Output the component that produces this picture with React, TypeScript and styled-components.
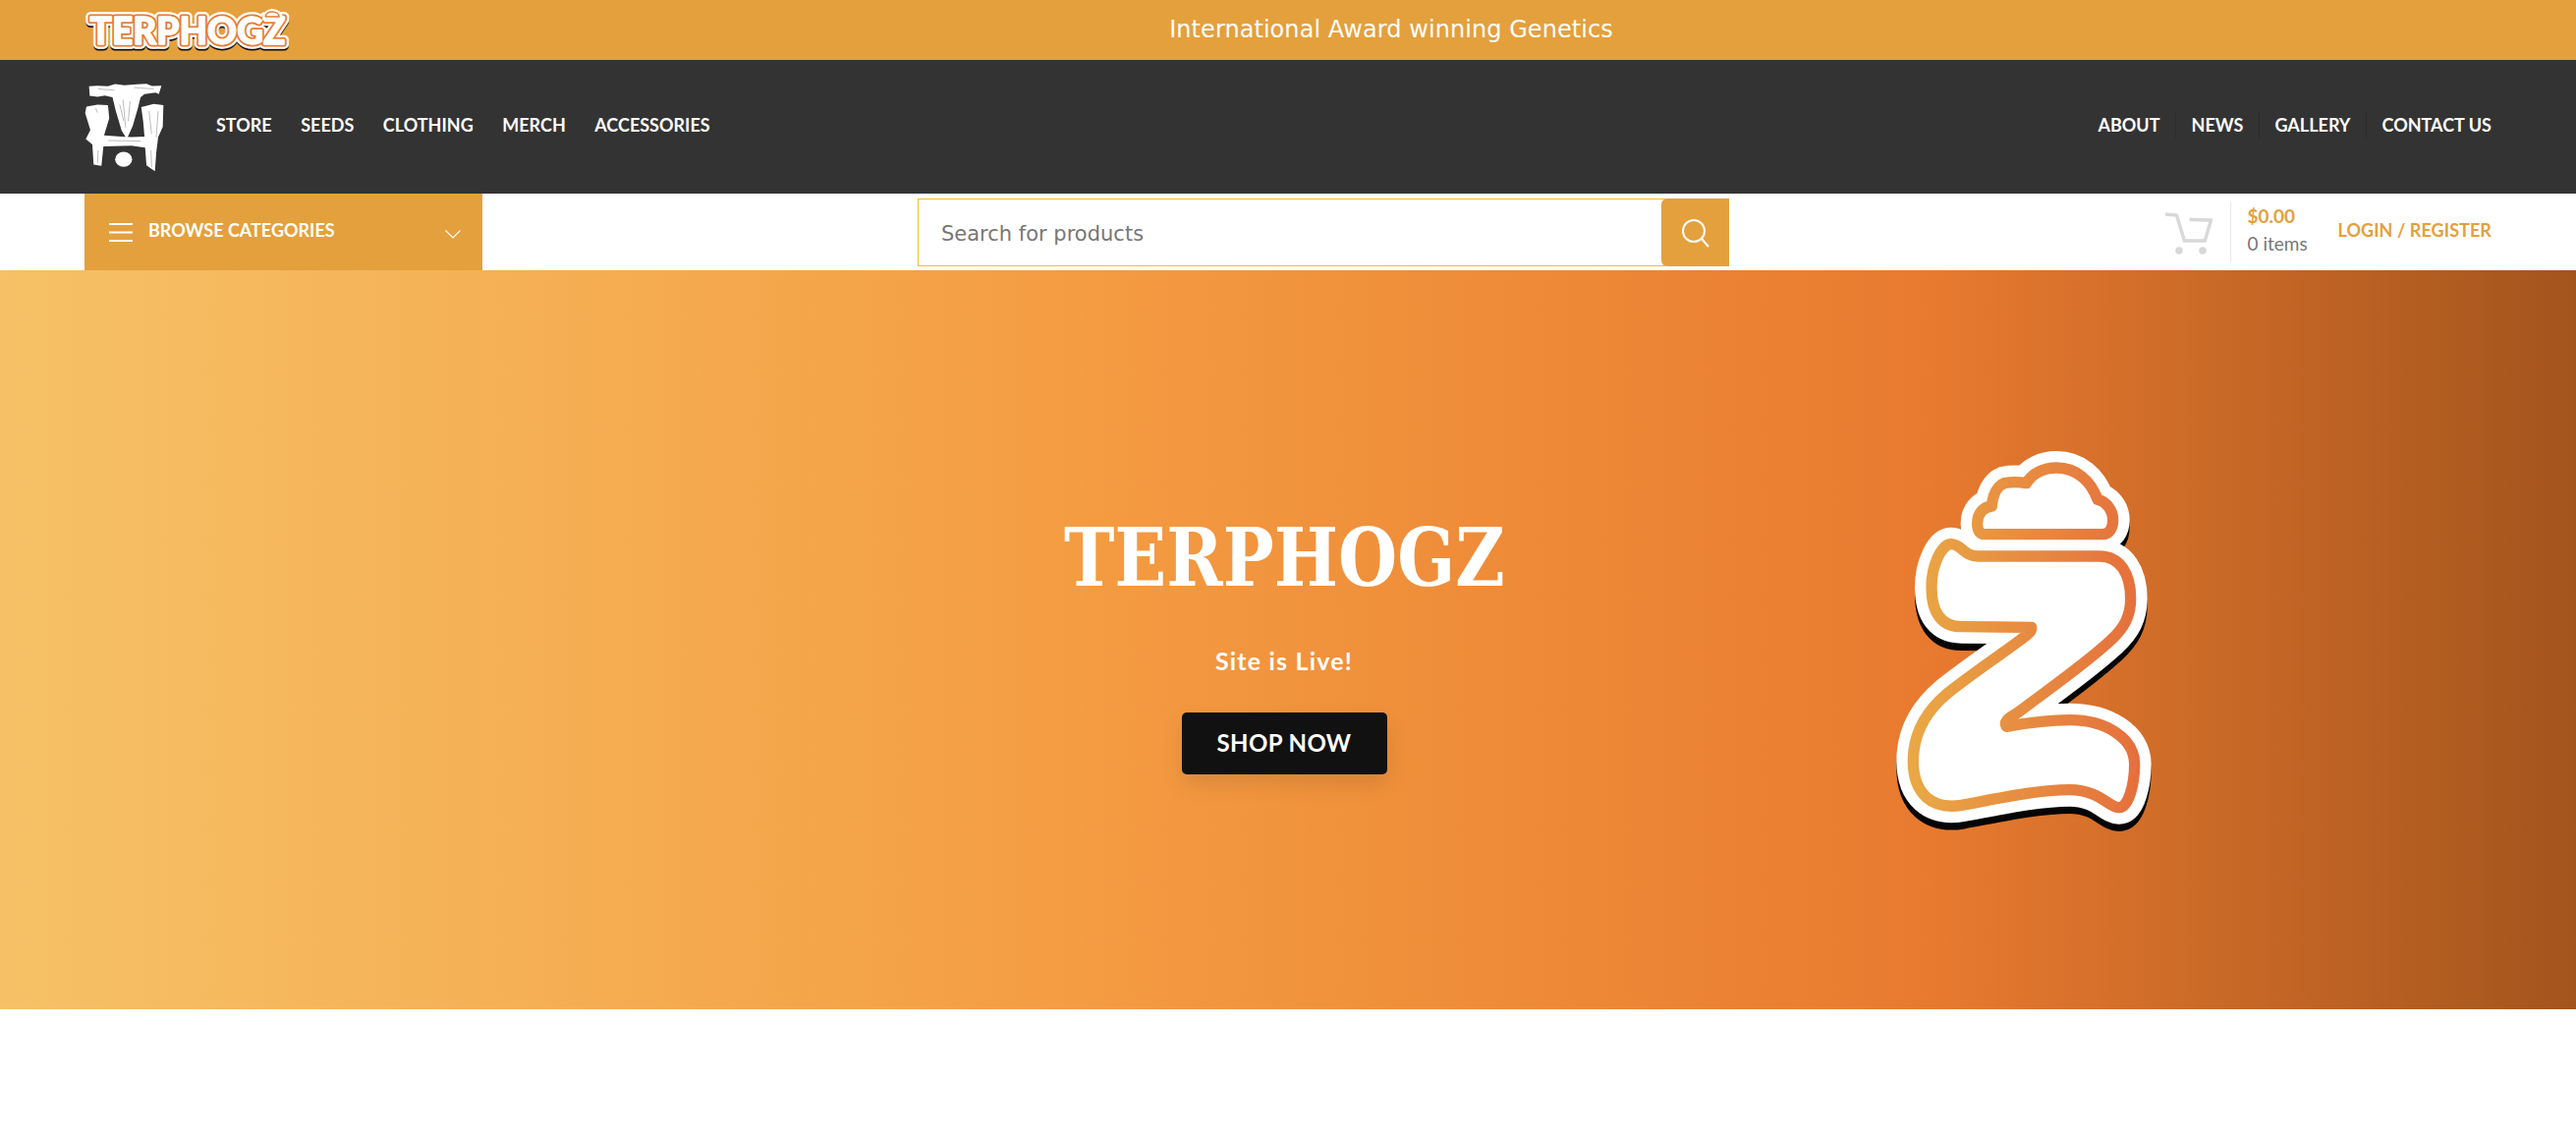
import React from "react";
import styled, { createGlobalStyle } from "styled-components";

const Global = createGlobalStyle`
  html, body { margin: 0; padding: 0; background: #fff; }
  body { font-family: "Lato", "Liberation Sans", sans-serif; overflow: hidden; }
  #root { min-height: 1158px; }
`;

const TopBar = styled.div`
  height: 61px;
  background: #e4a03c;
  display: flex;
  align-items: center;
  padding: 0 86px;
`;
const TopLogo = styled.svg`
  width: 210px;
  height: 46px;
  flex: none;
  margin-top: -1px;
`;
const Promo = styled.div`
  flex: 1;
  text-align: center;
  color: #fff;
  font: 400 24px/30px "DejaVu Sans", sans-serif;
  letter-spacing: 0.06px;
  margin-top: -1px;
`;
const MainBar = styled.header`
  height: 136px;
  background: #333;
  display: flex;
  align-items: center;
  padding: 0 86px;
`;
const Mark = styled.svg`
  width: 81px;
  height: 92px;
  flex: none;
  margin-right: 53px;
  margin-top: -1px;
`;
const NavList = styled.nav<{ $right?: boolean }>`
  display: flex;
  align-items: center;
  margin-left: ${(p) => (p.$right ? "auto" : "0")};
  margin-top: -3px;
`;
const NavLink = styled.a<{ $divided?: boolean }>`
  color: #fff;
  font: 700 18px/27px "Lato", sans-serif;
  padding: 0 ${(p) => (p.$divided ? "15.5px" : "0")};
  margin-right: ${(p) => (p.$divided ? "0" : "29.5px")};
  border-left: ${(p) => (p.$divided ? "1px solid rgba(0,0,0,.12)" : "0")};
  &:first-child { border-left: 0; }
  &:last-child { margin-right: 0; padding-right: 0; }
`;
const SubBar = styled.div`
  height: 78px;
  display: flex;
  padding: 0 86px;
  background: #fff;
`;
const Browse = styled.div`
  width: 405px;
  flex: none;
  box-sizing: border-box;
  background: #e4a03c;
  color: #fff;
  display: flex;
  align-items: center;
  padding: 0 22px 0 25px;
  font: 700 18px/24px "Lato", sans-serif;
`;
const BrowseLabel = styled.span`
  margin-left: 16px;
  flex: 1;
  margin-top: -5px;
`;
const Search = styled.form`
  width: 826px;
  height: 69px;
  margin: 5px 0 0 443px;
  display: flex;
  flex: none;
`;
const SearchInput = styled.div`
  flex: 1;
  border: 1px solid #fbb92f;
  border-right: 0;
  display: flex;
  align-items: center;
  padding: 2px 0 0 23px;
  color: #777;
  font: 400 21px/28px "DejaVu Sans", sans-serif;
`;
const SearchButton = styled.button`
  width: 69px;
  border: 0;
  padding: 0;
  margin-left: -4px;
  background: #e4a03c;
  border-radius: 6px 0 0 6px;
  display: flex;
  align-items: center;
  justify-content: center;
`;
const Tools = styled.div`
  margin-left: auto;
  display: flex;
  align-items: center;
`;
const CartGlyph = styled.svg`
  width: 48px;
  height: 43px;
  margin-top: 3px;
`;
const CartText = styled.div`
  margin-left: 18px;
  padding: 2px 0 6px 17px;
  box-sizing: border-box;
  height: 60px;
  border-left: 1px solid #e6e6e6;
  display: flex;
  flex-direction: column;
  justify-content: space-between;
  font: 400 19px/24px "Lato", sans-serif;
  color: #777;
  width: 93px;
`;
const Price = styled.span`
  color: #e4a03c;
  font-weight: 700;
`;
const Account = styled.a`
  margin-left: 17px;
  color: #e4a03c;
  font: 700 18px/24px "Lato", sans-serif;
  letter-spacing: 0.06px;
  margin-top: -5px;
`;
const Hero = styled.section`
  height: 752px;
  display: grid;
  grid-template-columns: 746px 1122px 754px;
  align-items: center;
  background: linear-gradient(90deg, #f6c166 0%, #f49c42 42%, #e87a2f 75%, #a3541d 100%);
`;
const HeroCopy = styled.div`
  grid-column: 2;
  display: flex;
  flex-direction: column;
  align-items: center;
  color: #fff;
  padding-top: 7px;
`;
const HeroTitle = styled.h1`
  margin: 0;
  font-family: "DejaVu Serif", serif;
  font-weight: 700;
  font-size: 82px;
  line-height: 90px;
  font-stretch: condensed;
  transform: scaleX(0.937);
  white-space: nowrap;
`;
const HeroSub = styled.p`
  margin: 43px 0 0;
  font: 700 25px/34px "Lato", sans-serif;
  letter-spacing: 1.2px;
`;
const ShopButton = styled.a`
  margin-top: 36px;
  width: 209px;
  height: 63px;
  border-radius: 5px;
  background: #111;
  color: #fff;
  display: flex;
  align-items: center;
  justify-content: center;
  font: 700 24px/1 "Lato", sans-serif;
  letter-spacing: 0.4px;
  box-shadow: 0 10px 22px rgba(0, 0, 0, 0.1);
`;
const HeroMark = styled.svg`
  grid-column: 3;
  width: 280px;
  height: 400px;
  margin-left: 52px;
`;

const zPath =
  "M318 368 C350 368 355 405 400 405 L770 405 C835 405 866 460 866 535 C866 590 845 625 805 662 C720 740 610 815 525 880 C505 895 475 905 487 925 C560 912 620 905 680 905 C790 905 878 960 878 1040 C878 1100 860 1172 830 1172 C800 1172 770 1118 680 1118 C580 1118 460 1145 350 1165 C260 1180 202 1130 202 1030 C202 950 240 880 305 825 C380 765 470 705 530 660 C550 645 565 635 563 622 L350 620 C290 620 258 580 258 500 C258 430 290 368 318 368 Z";
const cloudPath =
  "M420 338 L780 338 C800 338 812 320 812 295 C812 262 790 238 765 232 C745 175 700 135 640 135 C600 135 565 152 548 182 C525 178 500 178 480 182 C460 190 445 215 442 252 C415 255 398 275 398 305 C398 325 405 338 420 338 Z";

const App: React.FC = () => (
  <>
    <Global />
    <TopBar>
      <TopLogo viewBox="0 0 210 46">
        <g fontFamily="Lato, sans-serif" fontWeight={900} fontSize="37">
          <text x="5.5" y="39.5" textLength="199" lengthAdjust="spacingAndGlyphs" stroke="#111" strokeWidth="9" strokeLinejoin="round" fill="#111">TERPHOGZ</text>
          <text x="5.5" y="38" textLength="199" lengthAdjust="spacingAndGlyphs" stroke="#fff" strokeWidth="9.5" strokeLinejoin="round" fill="#fff">TERPHOGZ</text>
          <text x="5.5" y="38" textLength="199" lengthAdjust="spacingAndGlyphs" stroke="#e87a30" strokeWidth="5" strokeLinejoin="round" fill="#e87a30">TERPHOGZ</text>
          <text x="5.5" y="38" textLength="199" lengthAdjust="spacingAndGlyphs" stroke="#fff" strokeWidth="1.3" strokeLinejoin="round" fill="#fff">TERPHOGZ</text>
        </g>
        <path d="M183 12 c0-5 4-8 8-8 c5 0 9 3 9 8 z" fill="#fff" stroke="#fff" strokeWidth="4" strokeLinejoin="round" />
        <path d="M184 10 c1-4 4-5 7-5 c4 0 7 2 7 5 h-14" fill="#fff" stroke="#e87a30" strokeWidth="1.6" />
      </TopLogo>
      <Promo>International Award winning Genetics</Promo>
    </TopBar>

    <MainBar>
      <Mark viewBox="78 250 244 276">
        <g fill="#fff">
          <path d="M92 264 L118 262 L150 264 L172 257 L200 261 L240 258 L268 256 L285 263 L314 262 L306 288 L296 283 L262 288 L250 298 L242 330 L226 385 L208 426 L192 400 L174 340 L164 298 L140 292 L118 296 L94 293 Z" />
          <path d="M84 326 L118 320 L150 322 L154 362 L138 414 L190 418 L222 420 L262 418 L258 372 L252 328 L290 318 L320 322 L318 388 L304 420 L298 468 L294 524 L268 506 L264 452 L222 446 L136 448 L130 508 L106 504 L102 442 L82 426 L96 398 L80 346 Z" />
          <ellipse cx="198" cy="488" rx="26" ry="23" />
        </g>
        <g stroke="#333" strokeWidth="1" fill="none">
          <path d="M196 305 L204 390 M218 310 L212 370 M186 320 L198 370" />
          <path d="M112 330 L118 345 M276 340 L284 410 M304 340 L298 420 M120 460 L118 500 M282 460 L284 512" />
          <path d="M120 272 L170 276 M230 268 L290 272 M150 430 L250 432" />
        </g>
      </Mark>
      <NavList>
        {["STORE", "SEEDS", "CLOTHING", "MERCH", "ACCESSORIES"].map((t) => (
          <NavLink key={t}>{t}</NavLink>
        ))}
      </NavList>
      <NavList $right>
        {["ABOUT", "NEWS", "GALLERY", "CONTACT US"].map((t) => (
          <NavLink key={t} $divided>{t}</NavLink>
        ))}
      </NavList>
    </MainBar>

    <SubBar>
      <Browse>
        <svg width="24" height="19" viewBox="0 0 24 19" stroke="#fff" strokeWidth="2" fill="none">
          <path d="M0 1 H24 M0 9.5 H24 M0 18 H24" />
        </svg>
        <BrowseLabel>BROWSE CATEGORIES</BrowseLabel>
        <svg width="16" height="9" viewBox="0 0 16 9" stroke="#fff" strokeWidth="1.2" fill="none" style={{ marginTop: 5 }}>
          <path d="M0.5 0.5 L8 8 L15.5 0.5" />
        </svg>
      </Browse>
      <Search>
        <SearchInput>Search for products</SearchInput>
        <SearchButton type="button" aria-label="Search">
          <svg width="30" height="30" viewBox="0 0 30 30" stroke="#fff" strokeWidth="2" fill="none">
            <circle cx="13" cy="13" r="11" />
            <path d="M21 21 L28 29" />
          </svg>
        </SearchButton>
      </Search>
      <Tools>
        <CartGlyph viewBox="0 0 48 43" fill="none" stroke="#d8d8d8" strokeWidth="3.4">
          <path d="M0 2 L11.5 3 L19.4 29 H40.3 L46.5 8 L24.6 7.5" />
          <circle cx="14" cy="39" r="3.8" fill="#d8d8d8" stroke="none" />
          <circle cx="38" cy="39" r="3.8" fill="#d8d8d8" stroke="none" />
        </CartGlyph>
        <CartText>
          <Price>$0.00</Price>
          <span>0 items</span>
        </CartText>
        <Account>LOGIN / REGISTER</Account>
      </Tools>
    </SubBar>

    <Hero>
      <HeroCopy>
        <HeroTitle>TERPHOGZ</HeroTitle>
        <HeroSub>Site is Live!</HeroSub>
        <ShopButton>SHOP NOW</ShopButton>
      </HeroCopy>
      <HeroMark viewBox="120 60 840 1200">
        <defs>
          <linearGradient id="zband" gradientUnits="userSpaceOnUse" x1="185" y1="0" x2="895" y2="0">
            <stop offset="0" stopColor="#e9a945" />
            <stop offset="1" stopColor="#e56f3d" />
          </linearGradient>
        </defs>
        <g transform="translate(0 22)" fill="#050505" stroke="#050505" strokeWidth="102" strokeLinejoin="round">
          <path d={zPath} />
          <path d={cloudPath} />
        </g>
        <g fill="#fff" stroke="#fff" strokeWidth="102" strokeLinejoin="round">
          <path d={zPath} />
          <path d={cloudPath} />
        </g>
        <g fill="#fff" stroke="url(#zband)" strokeWidth="34" strokeLinejoin="round">
          <path d={zPath} />
          <path d={cloudPath} />
        </g>
      </HeroMark>
    </Hero>
  </>
);

export default App;
